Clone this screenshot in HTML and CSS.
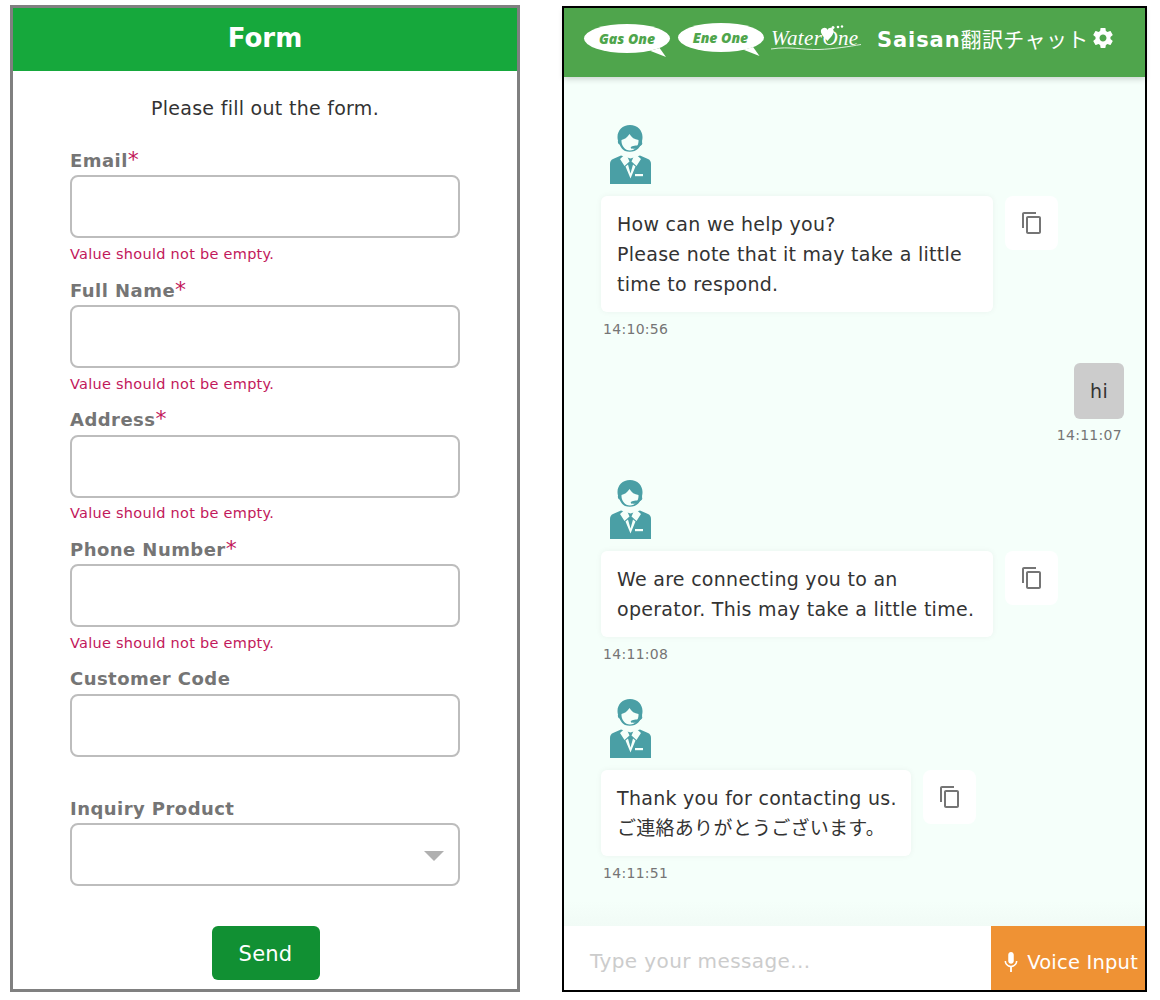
FILE: index.html
```html
<!DOCTYPE html>
<html lang="en">
<head>
<meta charset="utf-8">
<title>Form and chat</title>
<link rel="stylesheet" href="styles.css">
</head>
<body>
<svg class="defs" width="0" height="0" aria-hidden="true">
  <symbol id="agent" viewBox="0 0 41 59">
    <path fill="#4a9fa5" d="M20 0C12.500 0 7.500 5.500 7.500 12c0 1.500.2 2.500.5 3.500-.5 1.500.2 3.500 1.500 4 1.500 3.500 3.500 5.500 5.500 6.500 3 1 6.500 1 9.500 0 2.500-1 5-3.200 6-6 1.300-.5 2-2.500 1.500-4 .3-1 .5-2.200.5-4C32.500 5.500 27.500 0 20 0z"/>
    <path fill="#f5fffa" d="M11.500 15c2.500-.5 6-2.500 8-6 2 3.500 5 5.500 9 6 .5 5.500-3.500 10.500-8.500 10.500S11 20.500 11.500 15z"/>
    <path fill="#4a9fa5" d="M27.500 20.500c2-.5 3.500-1.500 4-2.500l1 .5c-.8 1.800-2.500 3-4.500 3.500-.3 1-2.500 1.800-5 1.800-1.200 0-2.300-.4-2.300-1.200s2-2.100 6.800-2.100z"/>
    <path fill="#4a9fa5" d="M11 30.500 3 34C1 35 0 36.500 0 39v20h41V39c0-2.500-1-4-3-5l-8-3.500-9.500 3z"/>
    <path fill="#f5fffa" d="M16 28.500 10 34l4.500 7 5-4.500zM25 28.500 31 34l-4.500 7-5-4.500zM15.500 41.500l5 12 5-12-2.500-2-2.500 9-2.500-9z"/>
    <rect fill="#f5fffa" x="25" y="49" width="8" height="2.200"/>
  </symbol>
  <symbol id="copy" viewBox="0 0 24 24">
    <path fill="#757575" d="M16 1H4c-1.100 0-2 .9-2 2v14h2V3h12V1zm3 4H8c-1.100 0-2 .9-2 2v14c0 1.100.9 2 2 2h11c1.100 0 2-.9 2-2V7c0-1.100-.9-2-2-2zm0 16H8V7h11v14z"/>
  </symbol>
</svg>

<main class="page">
  <section class="form-panel">
    <header class="form-header">Form</header>
    <form class="form-body">
      <p class="form-intro">Please fill out the form.</p>
      <div class="field">
        <label class="field-label">Email<span class="req">*</span></label>
        <div class="input"></div>
        <p class="field-error">Value should not be empty.</p>
      </div>
      <div class="field">
        <label class="field-label">Full Name<span class="req">*</span></label>
        <div class="input"></div>
        <p class="field-error">Value should not be empty.</p>
      </div>
      <div class="field">
        <label class="field-label">Address<span class="req">*</span></label>
        <div class="input"></div>
        <p class="field-error">Value should not be empty.</p>
      </div>
      <div class="field">
        <label class="field-label">Phone Number<span class="req">*</span></label>
        <div class="input"></div>
        <p class="field-error">Value should not be empty.</p>
      </div>
      <div class="field">
        <label class="field-label">Customer Code</label>
        <div class="input"></div>
        <p class="field-error"></p>
      </div>
      <div class="field">
        <label class="field-label">Inquiry Product</label>
        <div class="input select"><span class="caret"></span></div>
      </div>
      <div class="send-row"><button type="button" class="send">Send</button></div>
    </form>
  </section>

  <section class="chat-panel">
    <header class="chat-header">
      <div class="logos">
        <span class="bubble-logo">Gas One</span>
        <span class="bubble-logo">Ene One</span>
        <span class="water-logo">WaterOne
          <svg class="water-mark" viewBox="0 0 90 30" aria-hidden="true">
            <path fill="#fff" d="M50 6c2-3 5.500-3 6.500 0 1-3 5-3 6 0 1 4-3.500 8-6 11-2.500-3-7.500-7-6.500-11z"/>
            <circle fill="#fff" cx="62" cy="3.500" r="1.500"/><circle fill="#fff" cx="67" cy="3" r="1.300"/><circle fill="#fff" cx="71" cy="2.500" r="1.200"/>
            <path fill="none" stroke="#fff" stroke-width=".8" d="M0 25c20-3 30 1 48 .5 15-.5 30-3 42-5"/>
          </svg>
        </span>
      </div>
      <h1 class="chat-title">Saisan<span class="title-jp">翻訳チャット</span></h1>
      <svg class="gear" viewBox="0 0 24 24" aria-hidden="true">
        <path fill="#fff" d="M19.430 12.980c.04-.32.07-.64.07-.98s-.03-.66-.07-.98l2.110-1.650c.19-.15.240-.42.120-.64l-2-3.460c-.12-.22-.39-.3-.61-.22l-2.490 1c-.52-.4-1.080-.73-1.690-.98l-.38-2.650C14.460 2.180 14.250 2 14 2h-4c-.25 0-.46.18-.49.42l-.38 2.650c-.61.25-1.170.59-1.690.98l-2.490-1c-.23-.09-.49 0-.61.22l-2 3.460c-.13.22-.07.49.12.64l2.110 1.650c-.04.32-.07.65-.07.98s.03.66.07.98l-2.110 1.650c-.19.150-.24.420-.12.640l2 3.460c.12.220.39.300.61.220l2.490-1c.52.400 1.080.730 1.690.980l.38 2.650c.03.240.24.420.49.420h4c.25 0 .46-.18.49-.42l.38-2.650c.61-.25 1.170-.59 1.690-.98l2.490 1c.23.090.49 0 .61-.22l2-3.460c.12-.22.07-.49-.12-.64l-2.110-1.650zM12 15.500c-1.930 0-3.500-1.570-3.500-3.500s1.570-3.500 3.500-3.500 3.500 1.570 3.500 3.500-1.570 3.500-3.500 3.500z"/>
      </svg>
    </header>

    <div class="messages">
      <article class="msg">
        <svg class="avatar"><use href="#agent"/></svg>
        <div class="msg-row">
          <p class="msg-bubble">How can we help you?<br>Please note that it may take a little time to respond.</p>
          <button type="button" class="copy"><svg class="copy-icon"><use href="#copy"/></svg></button>
        </div>
        <time class="msg-time">14:10:56</time>
      </article>
      <article class="msg msg-user">
        <p class="msg-bubble user-bubble">hi</p>
        <time class="msg-time">14:11:07</time>
      </article>
      <article class="msg msg-short-gap">
        <svg class="avatar"><use href="#agent"/></svg>
        <div class="msg-row">
          <p class="msg-bubble">We are connecting you to an operator. This may take a little time.</p>
          <button type="button" class="copy"><svg class="copy-icon"><use href="#copy"/></svg></button>
        </div>
        <time class="msg-time">14:11:08</time>
      </article>
      <article class="msg">
        <svg class="avatar"><use href="#agent"/></svg>
        <div class="msg-row">
          <p class="msg-bubble msg-bubble-tight">Thank you for contacting us.<br>ご連絡ありがとうございます。</p>
          <button type="button" class="copy"><svg class="copy-icon"><use href="#copy"/></svg></button>
        </div>
        <time class="msg-time">14:11:51</time>
      </article>
    </div>

    <footer class="chat-footer">
      <span class="chat-input">Type your message...</span>
      <button type="button" class="voice">
        <svg class="mic" viewBox="0 0 24 24" aria-hidden="true"><path fill="#fff" d="M12 14c1.660 0 3-1.340 3-3V4c0-1.660-1.340-3-3-3S9 2.340 9 4v7c0 1.660 1.340 3 3 3zm5.300-3c0 3-2.540 5.100-5.300 5.100S6.700 14 6.700 11H5c0 3.410 2.720 6.230 6 6.720V23h2v-5.280c3.280-.49 6-3.310 6-6.720h-1.700z"/></svg>
        Voice Input
      </button>
    </footer>
  </section>
</main>
</body>
</html>
```
FILE: styles.css
```css
* { box-sizing: border-box; }
html, body { margin: 0; padding: 0; }
body {
  background: #fff;
  font-family: "DejaVu Sans", "Noto Sans CJK JP", sans-serif;
  color: #333;
}
.defs { position: absolute; }
p, h1 { margin: 0; }
button { font: inherit; border: 0; padding: 0; }

.page {
  display: flex;
  height: 1000px;
  padding: 5px 13px 8px 10px;
  gap: 42px;
}

/* form */
.form-panel {
  width: 510px;
  border: 3px solid #808080;
  display: flex;
  flex-direction: column;
}
.form-header {
  height: 63px;
  background: #16a83c;
  color: #fff;
  font-weight: 700;
  font-size: 26px;
  line-height: 60px;
  text-align: center;
}
.form-body { padding: 0 57px; }
.form-intro {
  font-size: 19px;
  letter-spacing: .28px;
  line-height: 26px;
  text-align: center;
  margin: 24px 0 0;
  height: 52px;
}
.field { height: 129.6px; }
.field-label {
  display: block;
  height: 28.400px;
  line-height: 27.500px;
  font-size: 18px;
  letter-spacing: .45px;
  font-weight: 700;
  color: #757575;
}
.req {
  color: #c2185b;
  font-weight: 400;
  font-size: 22px;
  line-height: 20px;
}
.input {
  position: relative;
  height: 63px;
  border: 2px solid #bdbdbd;
  border-radius: 8px;
  background: #fff;
}
.field-error {
  color: #c2185b;
  font-size: 14.500px;
  letter-spacing: .27px;
  line-height: 20px;
  margin-top: 5.600px;
}
.caret {
  position: absolute;
  right: 14px;
  top: 26px;
  border-style: solid;
  border-width: 10px 10px 0;
  border-color: #b0b0b0 transparent transparent;
}
.send-row { display: flex; justify-content: center; margin-top: 1.600px; padding-left: 1px; }
.send {
  width: 108px;
  height: 54px;
  padding-top: 2px;
  background: #119033;
  color: #fff;
  border-radius: 6px;
  font-size: 21px;
  letter-spacing: .25px;
}

/* chat */
.chat-panel {
  width: 585px;
  margin-top: 1px;
  border: 2px solid #000;
  display: flex;
  flex-direction: column;
  background: #f5fffa;
}
.chat-header {
  height: 69px;
  background: #4fa54c;
  box-shadow: 0 2px 6px rgba(0,0,0,.18);
  display: flex;
  align-items: center;
  padding: 0 33px 8px 20px;
  color: #fff;
  position: relative;
}
.logos { display: flex; align-items: center; gap: 7.500px; }
.bubble-logo {
  position: relative;
  width: 86px;
  height: 29px;
  border-radius: 50%;
  background: #fff;
  color: #4fa54c;
  font-family: "Open Sans", sans-serif;
  font-style: italic;
  font-weight: 800;
  font-size: 14px;
  line-height: 29px;
  text-align: center;
}
.bubble-logo + .bubble-logo { margin-top: -2px; }
.bubble-logo::after {
  content: "";
  position: absolute;
  right: 4px;
  bottom: -4px;
  width: 16px;
  height: 9px;
  background: #fff;
  clip-path: polygon(0 30%, 100% 100%, 60% 0);
}
.water-logo {
  position: relative;
  width: 90px;
  height: 30px;
  font-family: "Liberation Serif", serif;
  font-style: italic;
  font-size: 21px;
  line-height: 28px;
  color: #fff;
  letter-spacing: .4px;
  white-space: nowrap;
}
.water-mark { position: absolute; left: 0; top: 0; width: 90px; height: 30px; }
.chat-title {
  margin: 0 0 2px 16px;
  font-size: 21px;
  font-weight: 700;
  letter-spacing: .9px;
  white-space: nowrap;
}
.title-jp { font-weight: 400; letter-spacing: .4px; }
.gear { width: 24px; height: 24px; margin: 0 0 2px 2px; flex: none; }

.messages {
  flex: 1;
  display: flex;
  flex-direction: column;
  gap: 24.500px;
  padding: 36px 21px 0 37px;
  background: linear-gradient(#f5fffa 97%, #f1fbf6);
}
.msg-user { margin-bottom: 0; }
.msg-short-gap { margin-bottom: -1px; }
.avatar { display: block; width: 41px; height: 59px; margin: 12px 0 12px 9px; }
.msg-row { display: flex; align-items: flex-start; gap: 12px; }
.msg-bubble {
  background: #fff;
  border-radius: 6px;
  padding: 13px 16px;
  font-size: 19px;
  letter-spacing: .28px;
  line-height: 30px;
  max-width: 392px;
  box-shadow: 0 0 6px rgba(0,0,0,.05);
}
.msg-bubble-tight { padding-right: 14.500px; }
.copy {
  width: 53px;
  height: 54px;
  background: #fff;
  border-radius: 8px;
  display: flex;
  align-items: center;
  justify-content: center;
}
.copy-icon { width: 24px; height: 24px; }
.msg-time {
  display: block;
  font-size: 14px;
  letter-spacing: .3px;
  line-height: 18px;
  color: #757575;
  margin: 8px 0 0 2px;
}
.msg-user { display: flex; flex-direction: column; align-items: flex-end; }
.user-bubble { background: #ccc; box-shadow: none; }
.msg-user .msg-time { margin: 7px 2px 0 0; }

.chat-footer { display: flex; height: 64px; background: #fff; }
.chat-input {
  flex: 1;
  font-size: 20px;
  letter-spacing: .4px;
  line-height: 70px;
  padding-left: 26px;
  color: #ccc;
}
.voice {
  width: 154px;
  background: #ef9234;
  color: #fff;
  font-size: 19.500px;
  letter-spacing: .2px;
  display: flex;
  align-items: center;
  justify-content: flex-end;
  padding: 8px 7px 0 0;
  white-space: nowrap;
  gap: 5px;
}
.mic { width: 22px; height: 22px; }
```
